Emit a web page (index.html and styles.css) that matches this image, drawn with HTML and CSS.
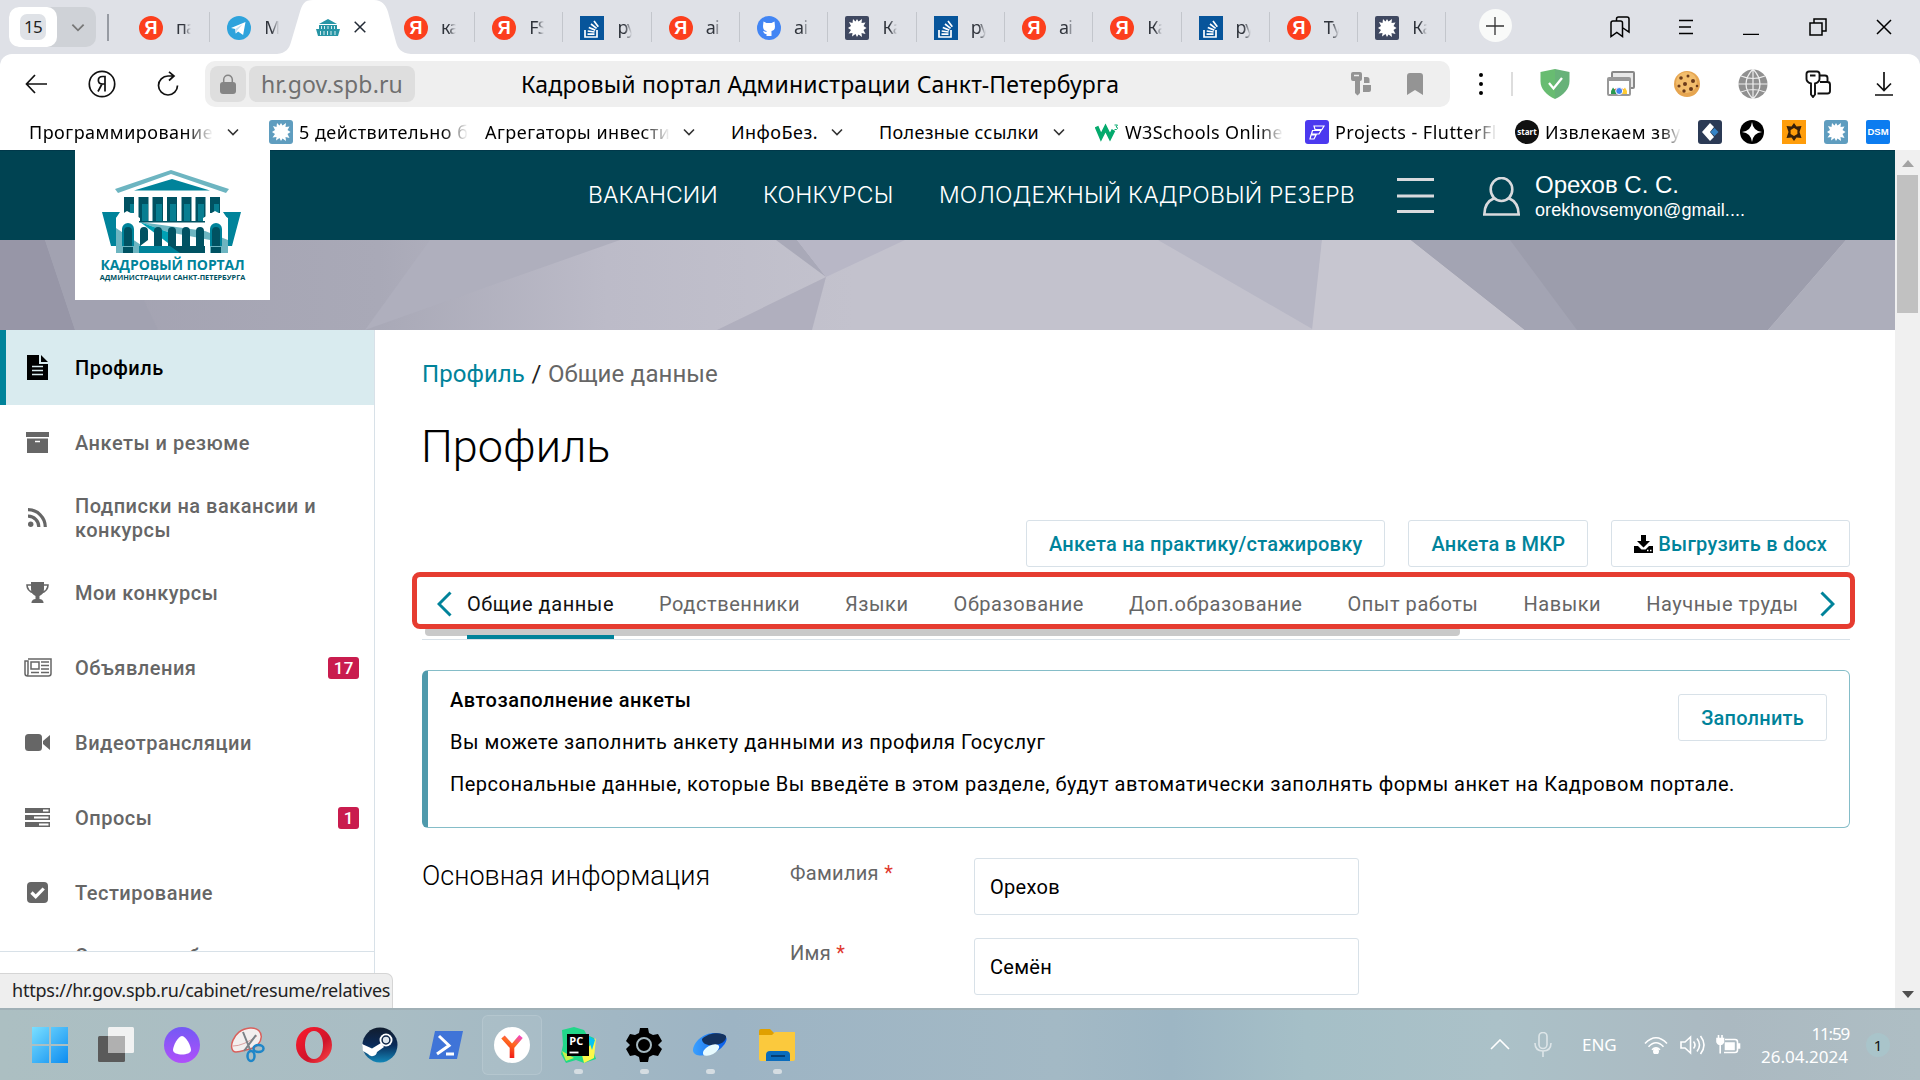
FILE: index.html
```html
<!DOCTYPE html>
<html lang="ru">
<head>
<meta charset="utf-8">
<title>Кадровый портал Администрации Санкт-Петербурга</title>
<link rel="stylesheet" href="styles.css">
</head>
<body>
<svg class="sprite" aria-hidden="true">
  <symbol id="i-so" viewBox="0 0 24 24"><rect width="24" height="24" fill="#07559b"/><path d="M5 14v7h12v-7M7.500 18.200h7M7.700 15l6.900 1M8.800 11.500l6.500 2.600M11 8l5.600 4.300M14 5l4.300 5.700" fill="none" stroke="#fff" stroke-width="1.700"/></symbol>
  <symbol id="i-tg" viewBox="0 0 24 24"><circle cx="12" cy="12" r="12" fill="#2ea3dc"/><path d="M4 12l14.500-6-2.400 13-5-3.600-2.300 2.100-.6-4.500z" fill="#fff"/><path d="M8.200 13l7.500-5-5.500 6.500-1.400 3z" fill="#c5dff0"/></symbol>
  <symbol id="i-gh" viewBox="0 0 24 24"><circle cx="12" cy="12" r="12" fill="#4285f4"/><path d="M6.500 5.500l3 1.500h5l3-1.500.5 5c0 3-1.500 4-3.500 4.500v5H9.500v-2c-2 .4-3-1.500-3.500-3l3.500 1v-1C7 14.500 6 13 6 10z" fill="#fff"/></symbol>
  <symbol id="i-splat" viewBox="0 0 24 24"><path d="M12 3l1.500 2.500L17 3l-.5 4 4-.5-2 3.500 3 2-3 2 2 4-4-1 .5 4-3.500-2.500L12 21l-1.500-3L7 20.500 7.500 17l-4 .5L6 14l-3-2 3-2-2-4 3.500 1L8 3l2.500 2.500z" fill="#fff"/></symbol>
  <symbol id="i-chev" viewBox="0 0 12 8"><path d="M1 1.500l5 5 5-5" fill="none" stroke="currentColor" stroke-width="1.600"/></symbol>
  <symbol id="i-build" viewBox="0 0 24 18"><path d="M3 5L12 0l9 5z" fill="#2795a5"/><path d="M3 6h18v4h3l-2 7H2L0 10h3z" fill="#2795a5"/><path d="M5.500 7v3M8.500 7v3M12 7v3M15.500 7v3M18.500 7v3M4.500 12v4M8 12v4M11.500 12v4M15 12v4M19 12v4" stroke="#d8eef0" stroke-width="1"/></symbol>
</svg>

<header class="tabstrip">
  <div class="tabcount"><span class="count"><i>15</i></span><svg class="chev"><use href="#i-chev"/></svg></div>
  <span class="strip-sep"></span>
  <div class="tabs">
    <div class="tab"><span class="ya">Я</span><span class="cap">па</span></div>
    <div class="tab nosep"><svg class="fav"><use href="#i-tg"/></svg><span class="cap">М</span></div>
    <div class="tab active nosep">
      <svg class="shape" width="134" height="54" viewBox="0 0 134 54"><path d="M0 54C9 53 12 49 14 42L22 15C25 4 27 0 36 0H97C105 0 109 5 111 12L119 42C121 49 124 53 134 54z" fill="#fff"/></svg>
      <svg class="fav"><use href="#i-build"/></svg>
      <svg class="x" width="12" height="12" viewBox="0 0 12 12"><path d="M.7.7l10.600 10.600M11.300.7L.7 11.300" stroke="#222a35" stroke-width="1.500"/></svg>
    </div>
    <div class="tab"><span class="ya">Я</span><span class="cap">ка</span></div>
    <div class="tab"><span class="ya">Я</span><span class="cap">FS</span></div>
    <div class="tab"><svg class="fav"><use href="#i-so"/></svg><span class="cap">ру</span></div>
    <div class="tab"><span class="ya">Я</span><span class="cap">ai</span></div>
    <div class="tab"><svg class="fav"><use href="#i-gh"/></svg><span class="cap">ai</span></div>
    <div class="tab"><svg class="fav dark"><use href="#i-splat"/></svg><span class="cap">Ка</span></div>
    <div class="tab"><svg class="fav"><use href="#i-so"/></svg><span class="cap">ру</span></div>
    <div class="tab"><span class="ya">Я</span><span class="cap">ai</span></div>
    <div class="tab"><span class="ya">Я</span><span class="cap">Ка</span></div>
    <div class="tab"><svg class="fav"><use href="#i-so"/></svg><span class="cap">ру</span></div>
    <div class="tab"><span class="ya">Я</span><span class="cap">Ту</span></div>
    <div class="tab"><svg class="fav dark"><use href="#i-splat"/></svg><span class="cap">Ка</span></div>
  </div>
  <span class="newtab"><svg width="18" height="18" viewBox="0 0 18 18"><path d="M9 0v18M0 9h18" stroke="#333" stroke-width="1.300"/></svg></span>
  <div class="winctl">
    <svg width="20" height="22" viewBox="0 0 20 22"><path d="M1 20.500V7q0-2 2-2h7.500q2 0 2 2v13.500l-5.700-4zM6.500 4.500V3q0-2 2-2H17q2 0 2 2v13l-6-4" /></svg>
    <svg width="16" height="16" viewBox="0 0 16 16"><path d="M1 1.500h14M1 8h12M1 14.500h14"/></svg>
    <svg width="16" height="16" viewBox="0 0 16 16"><path d="M0 15.500h16"/></svg>
    <svg width="18" height="18" viewBox="0 0 18 18"><path d="M1 5h12v12H1zM5 5V1h12v12h-4"/></svg>
    <svg width="16" height="16" viewBox="0 0 16 16"><path d="M1 1l14 14M15 1L1 15"/></svg>
  </div>
</header>

<div class="chrome">
  <div class="toolbar">
    <div class="navbtns">
      <svg width="22" height="20" viewBox="0 0 22 20"><path d="M10 1L1.500 10l8.500 9M1.500 10H22"/></svg>
      <svg width="28" height="28" viewBox="0 0 28 28"><circle cx="14" cy="14" r="12.700"/><path d="M17 21.500V6.500h-2.500c-5.500 0-5.500 7.500 0 7.500H17M14 14l-4 7.500"/></svg>
      <svg width="22" height="26" viewBox="0 0 22 26"><path d="M20.500 14.500A9.500 9.500 0 1 1 11 5h6M12 .8L17 5l-5 4.500"/></svg>
    </div>
    <div class="address">
      <span class="lock"><svg width="18" height="20" viewBox="0 0 18 20"><rect x="1" y="8" width="16" height="12" rx="3" fill="#858585"/><path d="M4.700 9V5.500a4.300 4.300 0 0 1 8.600 0V9" fill="none" stroke="#858585" stroke-width="1.500"/></svg></span>
      <span class="host">hr.gov.spb.ru</span>
      <span class="ptitle">Кадровый портал Администрации Санкт-Петербурга</span>
      <span class="addr-ico">
        <svg width="20" height="24" viewBox="0 0 20 24"><path d="M2 0h7q2 0 2 2v5q0 2-2 2v12l-2.500 2.500L4 21V9H2q-2 0-2-2V2q0-2 2-2zM13 5h3q2.500 0 2.500 2.500V11H13zM12 13h8v5q0 2-2 2h-6z" fill="#949494"/><path d="M3 3.500h5" stroke="#eee" stroke-width="1.500"/></svg>
        <svg width="16" height="22" viewBox="0 0 16 22"><path d="M0 22V3q0-3 3-3h10q3 0 3 3v19l-8-5z" fill="#949494"/></svg>
      </span>
    </div>
    <div class="ext">
      <svg width="4" height="22" viewBox="0 0 4 22"><path d="M2 0a2 2 0 1 1 0 4 2 2 0 0 1 0-4zM2 9a2 2 0 1 1 0 4 2 2 0 0 1 0-4zM2 18a2 2 0 1 1 0 4 2 2 0 0 1 0-4z" fill="#000"/></svg>
      <span class="ext-sep"></span>
      <svg class="shield" width="30" height="30" viewBox="0 0 30 30"><path d="M15 0l14.500 3v9c0 8-6 14-14.500 18z" fill="#67b279"/><path d="M15 0L.5 3v9c0 8 6 14 14.500 18z" fill="#68bc71"/><path d="M9 14l4.500 5.500L22 9" fill="none" stroke="#fff" stroke-width="2.300"/></svg>
      <svg class="cards" width="28" height="26" viewBox="0 0 28 26"><rect x="5" y="1" width="22" height="16" rx="1" fill="#e8e8e8" stroke="#888" stroke-width="2"/><rect x="1" y="7" width="22" height="17" rx="1" fill="#fff" stroke="#999" stroke-width="2"/><path d="M1 9h22" stroke="#999" stroke-width="2"/><path d="M4.500 23a8 9.500 0 0 1 15 0z" fill="#e23c2e"/><path d="M12 23h8a9 9 0 0 0-2-6.500z" fill="#fc3"/><path d="M4 23h7l-5-6.500A9 9 0 0 0 4 23z" fill="#2a9a50"/><circle cx="12.200" cy="20" r="3.500" fill="#4285f4" stroke="#fff"/></svg>
      <svg class="cookie" width="28" height="28" viewBox="0 0 28 28"><circle cx="14" cy="14" r="13" fill="#e6a550"/><circle cx="13.500" cy="12.500" r="10.500" fill="#f2bd6c"/><g fill="#6b3a1a"><circle cx="8" cy="8" r="1.800"/><circle cx="15" cy="6" r="1.500"/><circle cx="20" cy="11" r="2"/><circle cx="12" cy="14" r="2"/><circle cx="6" cy="16" r="1.600"/><circle cx="18" cy="19" r="2"/><circle cx="11" cy="21" r="1.700"/><circle cx="24" cy="16" r="1.300"/></g></svg>
      <svg class="globe" width="30" height="30" viewBox="0 0 30 30"><circle cx="15" cy="15" r="14.500" fill="#909090"/><path d="M15 0v30M0 15h30M3 7q12 5 24 0M3 23q12-5 24 0M15 0Q1 15 15 30M15 0q14 15 0 30" fill="none" stroke="#eee" stroke-width="1.200"/></svg>
      <svg class="key" width="26" height="28" viewBox="0 0 26 28"><path d="M10 24.500V13.500q4.500-1.500 4.500-4.500V4q0-2.500-2.500-2.500H4Q1.500 1.500 1.500 4v5q0 3 4.500 4.500V24.500l2 2.500zM5 5.500h5.500M15 5.500h5q2.500 0 2.500 2.500v4M15 12h7.500q2.500 0 2.500 2.500V21q0 2.500-2.500 2.500H12.500" fill="none" stroke="#111" stroke-width="1.900"/></svg>
      <svg class="down" width="18" height="24" viewBox="0 0 18 24"><path d="M9 0v18M2 11.500L9 18.500l7-7M0 23h18" fill="none" stroke="#111" stroke-width="1.700"/></svg>
    </div>
  </div>
  <nav class="bookmarks">
    <a class="bm b1"><span class="t fade">Программирование</span><svg class="c"><use href="#i-chev"/></svg></a>
    <a class="bm b2"><svg class="fav blue"><use href="#i-splat"/></svg><span class="t fade">5 действительно б</span></a>
    <a class="bm b3"><span class="t fade">Агрегаторы инвести</span><svg class="c"><use href="#i-chev"/></svg></a>
    <a class="bm b4"><span class="t">ИнфоБез.</span><svg class="c"><use href="#i-chev"/></svg></a>
    <a class="bm b5"><span class="t">Полезные ссылки</span><svg class="c"><use href="#i-chev"/></svg></a>
    <a class="bm b6"><svg class="fav" viewBox="0 0 24 24"><path d="M1.500 6.500L6 17l4.500-9L15 17l3.500-7" fill="none" stroke="#04aa6d" stroke-width="4"/><path d="M19.500 5h3l-1.500 2q1.700 0 1.500 1.500-.4 1.500-3 1" fill="none" stroke="#04aa6d" stroke-width="1"/></svg><span class="t fade">W3Schools Online</span></a>
    <a class="bm b7"><svg class="fav" viewBox="0 0 24 24"><rect width="24" height="24" rx="3" fill="#4b39ef"/><path d="M9 6h10l-2 3.500h-7zM7.500 10.500H16l-2 3.500H6.500zM6 15h5l-2 4H5z" fill="none" stroke="#fff" stroke-width="1.200"/></svg><span class="t fade">Projects - FlutterFl</span></a>
    <a class="bm b8"><span class="start"><i>start</i></span><span class="t fade">Извлекаем зву</span></a>
    <span class="bm-icons">
      <svg class="fav" viewBox="0 0 24 24"><rect width="24" height="24" rx="3" fill="#2b3a55"/><path d="M12 3l4 4-4 5 4 5-4 4-8-9z" fill="#fff"/><path d="M16.500 8l4 4-4 4-4-4z" fill="#3584c7"/></svg>
      <svg class="fav" viewBox="0 0 24 24"><circle cx="12" cy="12" r="12" fill="#000"/><path d="M12 2q1 9 10 10-9 1-10 10-1-9-10-10 9-1 10-10z" fill="#fff"/></svg>
      <svg class="fav" viewBox="0 0 24 24"><rect width="24" height="24" fill="#ff9d0a"/><path d="M12 3l2.500 3.500 5-.5-2 6 2 6-5-.5L12 21l-2.500-3.500-5 .5 2-6-2-6 5 .5z" fill="#38200a"/><path d="M12 8l3.400 2v4L12 16l-3.400-2v-4z" fill="#ff9d0a"/></svg>
      <svg class="fav blue"><use href="#i-splat"/></svg>
      <span class="dsm">DSM</span>
    </span>
  </nav>
</div>

<div class="viewport">
  <div class="page">
    <div class="sitehead">
      <div class="logo">
        <svg width="140" height="84" viewBox="0 0 140 84">
          <path d="M13 19L69 0v4L16 23zM69 0l58 19-3 4L69 4z" fill="#6db5c1"/><path d="M32 20.500L70 9l38 11.500z" fill="#00839a"/>
          <path d="M22 28h97v23H22z" fill="#fff"/>
          <g fill="#005262"><path d="M22 27h10v16H22zM36.500 27h10v24h-10zM50.500 27H61v24H50.500zM65 27h10v24H65zM79.500 27h10v24h-10zM93.500 27h10v24h-10zM108 27h10v16h-10z"/></g>
          <g fill="#087e91"><path d="M40 34h6v17h-6zM54 34h6v17h-6zM68 34h6v17h-6zM82 34h6v17h-6zM96 34h6v17h-6zM28 34h4v9h-4zM112 34h5v9h-5z"/></g>
          <path d="M0 42h18l-4 6v28H9zM139 42h-18l4 6v28h5z" fill="#00839a"/>
          <path d="M14 48l11-7 13 7v35H14zM101 48l12-7 13 7v35h-25z" fill="#fff"/>
          <path d="M14 58l25 17v8H14zM38 52l65 9 23 9v13h-18V70L66 62z" fill="#6db5c1"/><path d="M37 51h66v1.500H37z" fill="#005262"/><path d="M38 52l28 10 4 14z" fill="#00a0b3"/>
          <path d="M37 76h66v7H37z" fill="#00839a"/><path d="M68 76h35v7H78z" fill="#005262"/>
          <path d="M20 76V59a6 6 0 0 1 12 0v17zM108 76V59a6 6 0 0 1 12 0v17z" fill="#00839a"/>
          <g fill="#005262"><path d="M22 76V61a4 4 0 0 1 8 0v15zM110 76V61a4 4 0 0 1 8 0v15zM38 76V61a4 4 0 0 1 8 0v9zM52 76V61a4 4 0 0 1 8 0v15zM66 76V61a4 4 0 0 1 8 0v15zM80 76V61a4 4 0 0 1 8 0v15zM94 76V61a4 4 0 0 1 8 0v15zM21 77h10v6H21zM109 77h10v6h-10z"/></g>
        </svg>
        <b>КАДРОВЫЙ ПОРТАЛ</b>
        <i>АДМИНИСТРАЦИИ САНКТ-ПЕТЕРБУРГА</i>
      </div>
      <nav class="sitenav"><a class="n1">ВАКАНСИИ</a><a class="n2">КОНКУРСЫ</a><a class="n3">МОЛОДЕЖНЫЙ КАДРОВЫЙ РЕЗЕРВ</a></nav>
      <svg class="burger" width="37" height="37" viewBox="0 0 37 37"><path d="M0 2.500h37M0 19h37M0 34.500h37" stroke="#d9dadd" stroke-width="3"/></svg>
      <svg class="person" width="37" height="39" viewBox="0 0 37 39"><ellipse cx="18.500" cy="12.500" rx="10.800" ry="11.500"/><path d="M11.500 21C4.500 24 1.300 29 1.300 37.500h34.400C35.700 29 32.500 24 25.500 21"/></svg>
      <div class="user"><b>Орехов С. С.</b><i>orekhovsemyon@gmail....</i></div>
    </div>
    <svg class="banner" width="1895" height="90" viewBox="0 0 1895 90" preserveAspectRatio="none">
      <defs><linearGradient id="bg"><stop offset="0" stop-color="#a2a1b0"/><stop offset=".2" stop-color="#a9a9b7"/><stop offset=".32" stop-color="#bcbbc8"/><stop offset=".45" stop-color="#c3c2cd"/></linearGradient></defs>
      <rect width="1895" height="90" fill="url(#bg)"/>
      <path d="M0 0h45l30 90H0z" fill="#9796a7"/><path d="M45 0h70l43 90H75z" fill="#a2a2b1"/>
      <path d="M430 0h190L365 90z" fill="#afafbd"/>
      <path d="M776 0h21l29 37z" fill="#a9a9b8"/><path d="M797 0h108l-79 37z" fill="#b8b7c6"/><path d="M826 37L717 90h95z" fill="#b0afbe"/>
      <path d="M1158 0h164l-8 90z" fill="#b7b7c5"/><path d="M1322 0h89l114 90h-213z" fill="#c7c6d0"/>
      <path d="M1411 0h435l-78 90h-243z" fill="#9c9dac"/><path d="M1411 0h99l67 90h-52z" fill="#a3a4b3"/><path d="M1846 0h49v90h-127z" fill="#adaebb"/>
    </svg>
    <div class="cols">
      <aside class="side">
        <ul>
          <li class="on"><svg width="21" height="25" viewBox="0 0 21 25"><path d="M0 0h12v9h9v16H0zM14 0l7 7h-7z" fill="currentColor"/><path d="M5 11.500h11M5 15.500h11M5 19.500h11" stroke="#d9ebee" stroke-width="1.500"/></svg><span>Профиль</span></li>
          <li><svg width="23" height="21" viewBox="0 0 23 21"><path d="M0 0h23v5H0zM1 6.500h21V21H1z" fill="currentColor"/><path d="M9 9.500h5" stroke="#fff" stroke-width="1.500"/></svg><span>Анкеты и резюме</span></li>
          <li><svg width="19" height="19" viewBox="0 0 19 19"><circle cx="2.700" cy="16.300" r="2.700" fill="currentColor"/><path d="M0 8.200A10.500 10.500 0 0 1 10.800 19M0 1.700A17.300 17.300 0 0 1 17.300 19" fill="none" stroke="currentColor" stroke-width="3.200"/></svg><span>Подписки на вакансии и конкурсы</span></li>
          <li><svg width="23" height="21" viewBox="0 0 23 21"><path d="M5 0h13v7q0 5-4.500 7v3q3 0 4 3v1H5.500v-1q1-3 4-3v-3Q5 12 5 7z" fill="currentColor"/><path d="M5 3H1q0 6 7 8M18 3h4q0 6-7 8" fill="none" stroke="currentColor" stroke-width="1.600"/></svg><span>Мои конкурсы</span></li>
          <li><svg width="28" height="19" viewBox="0 0 28 19"><path d="M4 1h23v14.500q0 2.500-2.500 2.500H3.500Q1 18 1 15.500V3h3v12.500q0 2-1 2.500M7 4h8v7H7zM17 4h8M17 7.500h8M17 11h8M7 14.500h8M17 14.500h8" fill="none" stroke="currentColor" stroke-width="1.500"/></svg><span>Объявления</span><b>17</b></li>
          <li><svg width="25" height="17" viewBox="0 0 25 17"><rect width="17" height="17" rx="3.500" fill="currentColor"/><path d="M25 1v15l-7-6V7z" fill="currentColor"/></svg><span>Видеотрансляции</span></li>
          <li><svg width="25" height="19" viewBox="0 0 25 19"><path d="M0 0h25v5H0zM0 7h25v5H0zM0 14h25v5H0z" fill="currentColor"/><path d="M18 2.500h5.500M9 9.500h14.500M14 16.500h9.500" stroke="#fff" stroke-width="1.800"/></svg><span>Опросы</span><b>1</b></li>
          <li><svg width="21" height="21" viewBox="0 0 21 21"><rect width="21" height="21" rx="4" fill="currentColor"/><path d="M4.500 10.500l4.200 4.200 8-8.200" fill="none" stroke="#fff" stroke-width="3.200"/></svg><span>Тестирование</span></li>
          <li><span class="noicon">Сведения об образовании</span></li>
        </ul>
      </aside>
      <main>
        <p class="crumbs"><a>Профиль</a> <s>/</s> <span>Общие данные</span></p>
        <h1>Профиль</h1>
        <div class="actions">
          <button>Анкета на практику/стажировку</button>
          <button>Анкета в МКР</button>
          <button><svg width="19" height="18" viewBox="0 0 19 18"><path d="M7 0h5v6h4l-6.500 6.500L3 6h4zM0 11h4l3.500 3.500h4L15 11h4v7H0z"/><path d="M13 15.500h1.500M16 15.500h1.500" stroke="#fff" stroke-width="1.500"/></svg><span>Выгрузить в docx</span></button>
        </div>
        <div class="sections">
          <svg class="arr" width="15" height="26" viewBox="0 0 15 26"><path d="M13.500 1.500L2 13l11.500 11.500"/></svg>
          <a class="cur">Общие данные</a><a>Родственники</a><a>Языки</a><a>Образование</a><a>Доп.образование</a><a>Опыт работы</a><a>Навыки</a><a>Научные труды</a>
          <svg class="arr r" width="15" height="26" viewBox="0 0 15 26"><path d="M1.500 1.500L13 13 1.500 24.500"/></svg>
          <span class="hbar"></span><span class="under"></span><span class="frame"></span>
        </div>
        <section class="panel">
          <div class="ptext">
            <p class="strong">Автозаполнение анкеты</p>
            <p>Вы можете заполнить анкету данными из профиля Госуслуг</p>
            <p>Персональные данные, которые Вы введёте в этом разделе, будут автоматически заполнять формы анкет на Кадровом портале.</p>
          </div>
          <button>Заполнить</button>
        </section>
        <section class="form">
          <h2>Основная информация</h2>
          <div class="fields">
            <label><span>Фамилия <u>*</u></span><input value="Орехов"></label>
            <label><span>Имя <u>*</u></span><input value="Семён"></label>
          </div>
        </section>
      </main>
    </div>
  </div>
  <div class="vscroll"><svg width="12" height="7" viewBox="0 0 12 7"><path d="M0 7l6-7 6 7z" fill="#a3a3a3"/></svg><span class="thumb"></span><svg class="dn" width="12" height="7" viewBox="0 0 12 7"><path d="M0 0l6 7 6-7z" fill="#505050"/></svg></div>
  <div class="status">https://hr.gov.spb.ru/cabinet/resume/relatives</div>
</div>

<footer class="taskbar">
  <div class="apps">
    <span><svg viewBox="0 0 36 36"><defs><linearGradient id="w" x2="1" y2="1"><stop stop-color="#7adfff"/><stop offset="1" stop-color="#0c8cf0"/></linearGradient></defs><path d="M0 0h17v17H0zM19 0h17v17H19zM0 19h17v17H0zM19 19h17v17H19z" fill="url(#w)"/></svg></span>
    <span><svg viewBox="0 0 36 36"><rect x="0" y="9" width="27" height="26" rx="1.500" fill="#5a5a5a"/><rect x="10" y="0" width="26" height="26" rx="1.500" fill="#f4f4f4" opacity=".95"/><path d="M10 9h17v17H10z" fill="#b0b0b0"/></svg></span>
    <span><svg viewBox="0 0 36 36"><defs><linearGradient id="al" x2="0" y2="1"><stop stop-color="#7359f5"/><stop offset="1" stop-color="#b050fa"/></linearGradient></defs><circle cx="18" cy="18" r="18" fill="url(#al)"/><path d="M18 9c4 0 9 10 9 14 0 6-18 6-18 0 0-4 5-14 9-14z" fill="#fff"/></svg></span>
    <span><svg viewBox="0 0 36 36"><path d="M6 25C-3 25 2 2 20 1c16-1 14 18 0 21-5 1-9 3-14 3z" fill="#f3efef" stroke="#d9605c" stroke-width="1.500"/><path d="M3 19q10 0 24-10" fill="none" stroke="#d9a0a0" stroke-width="1"/><path d="M13 5l8 20M26 8L14 24" stroke="#7b8288" stroke-width="2"/><ellipse cx="21" cy="29" rx="3.500" ry="5" fill="none" stroke="#1f86c8" stroke-width="2.500"/><ellipse cx="28.500" cy="21.500" rx="5" ry="3.500" fill="none" stroke="#1f86c8" stroke-width="2.500"/></svg></span>
    <span><svg viewBox="0 0 36 36"><defs><linearGradient id="op" x2="1" y2="1"><stop stop-color="#ff1b2d"/><stop offset=".6" stop-color="#d0142a"/><stop offset="1" stop-color="#ff4a4a"/></linearGradient></defs><path fill-rule="evenodd" d="M18 0a18 18 0 1 1 0 36 18 18 0 0 1 0-36zm0 4c-12 0-12 28 0 28s12-28 0-28z" fill="url(#op)"/></svg></span>
    <span><svg viewBox="0 0 36 36"><defs><linearGradient id="st" x2="0" y2="1"><stop stop-color="#111d2e"/><stop offset=".5" stop-color="#0a2a58"/><stop offset="1" stop-color="#1387b8"/></linearGradient></defs><circle cx="18" cy="18" r="17.500" fill="url(#st)"/><path d="M0 17l10 4.500 9-5.500 3 4-7 5a5 5 0 0 1-9 2L1 24z" fill="#fff"/><circle cx="24" cy="13" r="6.500" fill="#fff"/><circle cx="24" cy="13" r="3.900" fill="#dfe6ec" stroke="#0d2547" stroke-width="1.500"/></svg></span>
    <span><svg viewBox="0 0 36 36"><path d="M7 4h28l-6 28H1z" fill="#3f74d8"/><path d="M11 9l10 9.500-12 8.500M18 27h8" fill="none" stroke="#fff" stroke-width="3"/></svg></span>
    <span class="act"><svg viewBox="0 0 36 36"><defs><linearGradient id="yy" gradientUnits="userSpaceOnUse" x1="28" y1="8" x2="16" y2="31"><stop stop-color="#f040e0"/><stop offset=".45" stop-color="#ff6a20"/><stop offset="1" stop-color="#f01818"/></linearGradient></defs><circle cx="18" cy="18" r="18" fill="#fff"/><path d="M9 10l9 10v11M27 9.500l-9 10.500" fill="none" stroke="url(#yy)" stroke-width="4.600"/></svg></span>
    <span class="run"><svg viewBox="0 0 36 36"><path d="M2 3l12-3 10 3 3 5 7 3-2 9 4 12-12 4-8-3-10 3-5-9 2-9z" fill="#21d789"/><path d="M22 28l14-17-2 20-10 5z" fill="#fcf84a"/><path d="M2 24l4 10 8-3z" fill="#c8f04a"/><path d="M27 8l8 5-3 10z" fill="#07c3f2"/><path d="M7 7h22v22H7z" fill="#000"/><path d="M9.500 25.500h9" stroke="#fff" stroke-width="1.800"/></svg><i>PC</i></span>
    <span class="run"><svg viewBox="0 0 36 36"><path d="M14 1h8l1 5 4 2 5-1 4 7-4 4 4 4-4 7-5-1-4 2-1 5h-8l-1-5-4-2-5 1-4-7 4-4-4-4 4-7 5 1 4-2z" fill="#000"/><circle cx="18" cy="18" r="7" fill="none" stroke="#a4b8c0" stroke-width="2"/></svg></span>
    <span class="run"><svg viewBox="0 0 36 36"><defs><linearGradient id="pl" x2="1"><stop stop-color="#3aa0ff"/><stop offset="1" stop-color="#0a5ce8"/></linearGradient></defs><path d="M1 24C1 14 13 5 24 6c12 1 13 6 7 13C25 27 3 33 1 24z" fill="url(#pl)"/><path d="M10 12C17 5 30 5 34 9c1 5-6 9-12 9-6 1-12-1-12-6z" fill="#14325f"/><ellipse cx="19" cy="23" rx="9" ry="4.500" transform="rotate(-28 19 23)" fill="#e8fbff"/></svg></span>
    <span class="run"><svg viewBox="0 0 36 36"><path d="M0 4q0-2 2-2h9l4 4v9H0z" fill="#e0a000"/><path d="M0 8h13l3-3h20v27q0 2-2 2H2q-2 0-2-2z" fill="#fbc93d"/><path d="M7 34v-6q0-4 4-4h16q4 0 4 4v6z" fill="#0a6cbd"/><path d="M12 29h14" stroke="#043e75" stroke-width="2"/></svg></span>
  </div>
  <div class="tray">
    <svg class="up" width="20" height="11" viewBox="0 0 20 11"><path d="M1 10l9-9 9 9"/></svg>
    <svg class="mic" width="18" height="25" viewBox="0 0 18 25"><path d="M5 4.500a4 4 0 0 1 8 0v8a4 4 0 0 1-8 0zM1 11q0 8 8 8t8-8M9 19v6"/></svg>
    <span class="lang">ENG</span>
    <svg class="wifi" width="24" height="18" viewBox="0 0 24 18"><path d="M1 7.500q11-11.500 22 0M4.500 10.800q7.500-8 15 0M8 13.800q4-4 8 0"/><circle cx="12" cy="15.500" r="2.200" fill="#fff"/></svg>
    <svg class="spk" width="25" height="20" viewBox="0 0 25 20"><path d="M1 7h4l5.500-5v16L5 13H1zM13.500 6.500q3 3.500 0 7M17 3.500q5 6.500 0 13M20.500 1q7 9 0 18"/></svg>
    <svg class="bat" width="25" height="19" viewBox="0 0 25 19"><path d="M9 4.500h10q2.500 0 2.500 2.500v8q0 2.500-2.500 2.500H8"/><path d="M9.500 8h8.500v6.500H9.500zM22 9h1.500v4H22zM1 3.500h6.500V7Q6.500 9.500 4.200 9.500 2 9.500 1 7zM4.200 9v9.500M2.500 0v4M6 0v4" fill="#fff"/></svg>
    <div class="clock"><span class="time">11:59</span><span>26.04.2024</span></div>
    <span class="note">1</span>
  </div>
</footer>
</body>
</html>
```
FILE: styles.css
```css
* { box-sizing: border-box; }
body { margin: 0; width: 1920px; height: 1080px; overflow: hidden; display: flex; flex-direction: column; background: #dfe1e7; color: #000; font-family: "Roboto", sans-serif; }
svg { display: block; flex: none; }
i, em { font-style: normal; }
s, u { text-decoration: none; }
.sprite { position: absolute; width: 0; height: 0; }
.fav { width: 24px; height: 24px; flex: none; }
.fav.dark { background: #3f4861; border-radius: 2px; }
.fav.blue { background: #5f9dbf; border-radius: 3px; }

/* tab strip */
.tabstrip { height: 54px; display: flex; align-items: flex-start; font-family: "Noto Sans", sans-serif; flex: none; }
.tabcount { margin: 7px 0 0 9px; width: 87px; height: 40px; border-radius: 10px; background: #cfd2d7; display: flex; align-items: center; }
.count { width: 48px; height: 40px; border-radius: 10px; background: #fff; display: flex; align-items: center; justify-content: center; }
.count i { width: 26px; height: 26px; border-radius: 7px; background: #dfe2e7; font-size: 17px; line-height: 26px; text-align: center; letter-spacing: -.6px; color: #222; }
.tabcount .chev { width: 14px; height: 9px; margin-left: 14px; color: #777; }
.strip-sep { width: 2px; height: 27px; background: #979ba3; margin: 14px 0 0 11px; }
.tabs { display: flex; margin-left: 12px; height: 54px; width: 1324.500px; }
.tab { position: relative; flex: 1 1 0; display: flex; padding: 16px 0 0 18px; }
.tab:not(.nosep)::after { content: ""; position: absolute; right: -1px; top: 12px; width: 1px; height: 30px; background: #c3c6cc; }
.ya { width: 24px; height: 24px; border-radius: 50%; background: #fc3f1d; color: #fff; font: 700 18px/24px "Liberation Sans", sans-serif; text-align: center; flex: none; }
.cap { margin-left: 13px; width: 15px; overflow: hidden; white-space: nowrap; font-size: 18px; line-height: 23px; color: #30343c; letter-spacing: -.8px; -webkit-mask-image: linear-gradient(90deg, #000 50%, transparent); mask-image: linear-gradient(90deg, #000 50%, transparent); }
.active .shape { position: absolute; left: -21px; top: 0; }
.active .fav, .active .x { position: relative; }
.active .x { margin: 5px 0 0 14px; }
.newtab { width: 33px; height: 33px; border-radius: 50%; background: #f9faf9; display: flex; align-items: center; justify-content: center; margin: 9px 0 0 33px; }
.winctl { display: flex; align-items: center; margin: 16px 0 0 98px; }
.winctl svg { fill: none; stroke: #000; stroke-width: 1.500px; }
.winctl svg + svg { margin-left: 49.500px; }
.winctl svg:nth-child(2) { margin-left: 48px; }

/* browser toolbar */
.chrome { background: #fff; border-radius: 12px 12px 0 0; height: 96px; flex: none; font-family: "Noto Sans", sans-serif; }
.toolbar { height: 60px; display: flex; align-items: center; }
.navbtns { display: flex; align-items: center; margin-left: 25px; width: 180px; }
.navbtns svg { fill: none; stroke: #111; stroke-width: 1.700px; }
.navbtns svg:nth-child(n+2) { margin-left: 41px; }
.address { width: 1245px; height: 46px; border-radius: 10px; background: #efefef; display: flex; align-items: center; padding: 0 27px 0 5px; }
.lock { width: 36px; height: 36px; border-radius: 8px; background: #dedede; display: flex; align-items: center; justify-content: center; }
.host { width: 166px; height: 36px; border-radius: 8px; background: #dedede; margin-left: 3px; padding-left: 12px; font-size: 23px; line-height: 36px; color: #6f6f6f; white-space: nowrap; letter-spacing: .16px; }
.ptitle { margin-left: 106px; font-size: 23px; white-space: nowrap; letter-spacing: .19px; }
.addr-ico { margin-left: auto; display: flex; align-items: center; gap: 36px; }
.ext { display: flex; align-items: center; margin-left: 29px; }
.ext-sep { width: 2px; height: 24px; background: #ddd; margin-left: 28px; }
.shield { margin-left: 27px; }
.cards { margin-left: 37px; }
.cookie { margin-left: 38px; }
.globe { margin-left: 36.500px; }
.key { margin-left: 37.500px; }
.down { margin-left: 43.500px; }

/* bookmarks */
.bookmarks { height: 36px; display: flex; align-items: center; padding-left: 29px; font-size: 18px; letter-spacing: .48px; }
.bm { display: flex; align-items: center; height: 36px; flex: none; }
.bm .t { white-space: nowrap; overflow: hidden; flex: none; }
.bm .fav, .start { margin-right: 6px; }
.bm .c { width: 12px; height: 8px; margin-left: auto; color: #333; }
.fade { -webkit-mask-image: linear-gradient(90deg, #000 85%, transparent); mask-image: linear-gradient(90deg, #000 85%, transparent); }
.b1 { width: 210px; } .b2 { width: 192px; margin-left: 30px; } .b3 { width: 210px; margin-left: 24px; }
.b4 { width: 112px; margin-left: 36px; } .b5 { width: 186px; margin-left: 36px; letter-spacing: .33px; } .b6 { width: 190px; margin-left: 30px; letter-spacing: .37px; }
.b7 { width: 190px; margin-left: 20px; } .b8 { width: 165px; margin-left: 20px; letter-spacing: .57px; }
.start { width: 24px; height: 24px; border-radius: 50%; background: #111; color: #fff; font: 700 8px/23px "Noto Sans", sans-serif; letter-spacing: 0; text-align: center; flex: none; }
.bm-icons { display: flex; gap: 18px; margin-left: 18px; }
.dsm { width: 24px; height: 24px; border-radius: 2px; background: #0c7cf0; color: #fff; font: 700 9.500px/24px "Liberation Sans", sans-serif; letter-spacing: 0; text-align: center; }

/* page */
.viewport { height: 858px; flex: none; display: flex; background: #fff; position: relative; overflow: hidden; }
.page { width: 1895px; height: 858px; overflow: hidden; }
.sitehead { height: 90px; background: #004352; display: flex; align-items: flex-start; position: relative; border-top: 1px solid #00384a; }
.logo { position: absolute; left: 75px; top: -1px; width: 195px; height: 150px; background: #fff; display: flex; flex-direction: column; align-items: center; padding-top: 20px; z-index: 1; }
.logo svg { margin-left: -2px; }
.logo b { font: 700 14px/18px "Open Sans", sans-serif; letter-spacing: -.1px; color: #00839a; margin-top: 2px; white-space: nowrap; }
.logo i { font: 700 7.300px/8px "Open Sans", sans-serif; color: #005262; margin-top: -1px; white-space: nowrap; }
.sitenav { display: flex; margin-left: 588px; padding-top: 30px; font: 300 23px/28px "Inter", sans-serif; color: #fff; white-space: nowrap; width: 768px; }
.sitenav a { flex: none; }
.n1 { width: 175px; } .n2 { width: 176px; letter-spacing: .25px; } .n3 { letter-spacing: .14px; }
.burger { margin: 26px 0 0 41px; }
.person { margin: 26px 0 0 49px; fill: none; stroke: #d9dadd; stroke-width: 2.600px; }
.user { margin: 20px 0 0 15px; display: flex; flex-direction: column; color: #fff; font-family: "Liberation Sans", sans-serif; white-space: nowrap; align-items: flex-start; }
.user b { font-weight: 400; font-size: 24px; line-height: 28px; }
.user i { font-size: 18px; line-height: 22px; letter-spacing: .08px; }
.cols { display: flex; height: 678px; }
.side { width: 375px; border-right: 1px solid #d8e1e8; flex: none; }
.side ul { list-style: none; margin: 0; padding: 0; height: 622px; overflow: hidden; border-bottom: 1px solid #d8e1e8; }
.side li { height: 75px; display: grid; grid-template-columns: 75px 1fr auto; align-items: center; color: #666; font-weight: 500; font-size: 20px; line-height: 24px; letter-spacing: .5px; padding-right: 15px; }
.side li > svg { justify-self: center; }
.side li.on { background: #d9ebef; color: #000; border-left: 6px solid #00839a; grid-template-columns: 69px 1fr auto; }
.side li.on > svg { margin-left: -6px; }
.side li b { background: #c91c4e; color: #fff; font: 500 17px/22px "Roboto", sans-serif; border-radius: 3px; padding: 0 5px 0 6px; height: 22px; letter-spacing: .5px; }
.side .noicon { grid-column: 2; width: 140px; }
main { flex: 1; padding: 0 45px 0 47px; }
.crumbs { margin: 29px 0 0; font-size: 24px; line-height: 30px; color: #666; white-space: nowrap; word-spacing: .6px; letter-spacing: .05px; }
.crumbs a { color: #00839a; } .crumbs s { color: #222; }
h1 { margin: 30px 0 0 -1px; font-size: 45px; line-height: 56px; font-weight: 300; white-space: nowrap; }
.actions { display: flex; justify-content: flex-end; gap: 23px; margin-top: 45px; }
button { height: 47px; border: 1px solid #d8e1e8; border-radius: 3px; background: #fff; color: #00839a; font: 500 20px/24px "Roboto", sans-serif; letter-spacing: .23px; padding: 0 22px; display: flex; align-items: center; gap: 5px; white-space: nowrap; }
.sections { position: relative; height: 73px; border-bottom: 1px solid #d8e1e8; display: flex; gap: 45px; align-items: center; padding: 1px 0 0 15px; font-size: 20px; line-height: 24px; letter-spacing: .55px; color: #666; white-space: nowrap; }
.sections .cur { color: #111; margin-left: -30px; }
.arr { fill: none; stroke: #00839a; stroke-width: 3px; }
.arr.r { margin-left: -24px; }
.hbar { position: absolute; left: 3px; top: 60px; width: 1035px; height: 9px; border-radius: 4px; background: #c9c9c9; }
.under { position: absolute; left: 45px; top: 68px; width: 147px; height: 4px; background: #00839a; }
.frame { position: absolute; left: -10px; top: 5px; width: 1443px; height: 57px; border: 5px solid #e63c30; border-radius: 8px; }
.panel { margin-top: 30px; height: 158px; border: 1px solid #85bdc8; border-left: 6px solid #4f9aac; border-radius: 6px; display: flex; justify-content: space-between; align-items: flex-start; padding: 17px 22px 0; }
.panel p { margin: 0 0 18px; font-size: 20px; line-height: 24px; letter-spacing: .5px; white-space: nowrap; }
.panel .strong { font-weight: 500; }
.panel button { margin-top: 6px; flex: none; }
.ptext { width: 1200px; }
.form { display: flex; margin-top: 30px; }
h2 { margin: 0; width: 368px; font-weight: 300; font-size: 27px; line-height: 36px; white-space: nowrap; }
.fields { display: flex; flex-direction: column; gap: 23px; }
label { display: flex; font-size: 20px; color: #666; }
label span { width: 184px; line-height: 30px; letter-spacing: .3px; }
label u { color: #e0392f; }
input { width: 385px; height: 57px; border: 1px solid #d8e1e8; border-radius: 3px; padding: 0 15px; font: 400 20px "Roboto", sans-serif; letter-spacing: .3px; color: #000; }
.vscroll { width: 25px; background: #f0f0f0; display: flex; flex-direction: column; align-items: center; padding-top: 10px; }
.thumb { width: 21px; height: 138px; background: #c1c1c1; margin-top: 8px; }
.dn { margin: auto 0 10px; }
.status { position: absolute; left: 0; bottom: 0; width: 393px; height: 35px; background: #eee; border: 1px solid #d5d5d5; border-width: 1px 1px 0 0; border-radius: 0 7px 0 0; font: 18px/33px "Noto Sans", sans-serif; letter-spacing: -.23px; color: #222; padding-left: 12px; white-space: nowrap; }

/* taskbar */
.taskbar { height: 72px; flex: none; display: flex; justify-content: space-between; background: linear-gradient(90deg, #acbfc2 0, #a9bdc4 20%, #9db4c4 38%, #a3b9c5 55%, #9db6c4 61%, #a5bfc7 68%, #abc1c8 78%, #abb9c1 90%, #aebec4 100%); border-top: 2px solid #a0b0b6; }
.apps { display: flex; padding: 5px 0 0 19.500px; }
.apps span { width: 60px; margin-right: 6.100px; height: 60px; display: flex; align-items: center; justify-content: center; position: relative; border-radius: 6px; padding-bottom: 1px; }
.apps svg { width: 36px; height: 36px; }
.apps .act { background: rgba(255,255,255,.06); border: 1px solid rgba(255,255,255,.12); }
.run::after { content: ""; position: absolute; bottom: 1px; left: 26px; width: 9px; height: 5px; border-radius: 3px; background: #d5dde2; }
.run i { position: absolute; left: 21px; top: 19px; color: #fff; font: 700 11px/14px "Open Sans", sans-serif; }
.tray { display: flex; align-items: center; color: #fff; font-family: "Noto Sans", sans-serif; padding: 0 30px 0 0; height: 69px; }
.tray svg { fill: none; stroke: #fff; stroke-width: 1.600px; }
.mic { margin-left: 24px; opacity: .6; }
.lang { margin-left: 30px; font-size: 17px; width: 36px; }
.wifi { margin-left: 26px; } .spk { margin-left: 12px; } .bat { margin-left: 11px; }
.clock { margin-left: 21px; width: 86px; display: flex; flex-direction: column; align-items: flex-end; font-size: 17px; line-height: 23px; white-space: nowrap; }
.time { letter-spacing: -1.200px; margin-right: -1px; }
.note { margin-left: 18px; width: 24px; height: 24px; border-radius: 50%; background: #a9c4ca; color: #111; font-size: 15px; line-height: 24px; text-align: center; }
```
